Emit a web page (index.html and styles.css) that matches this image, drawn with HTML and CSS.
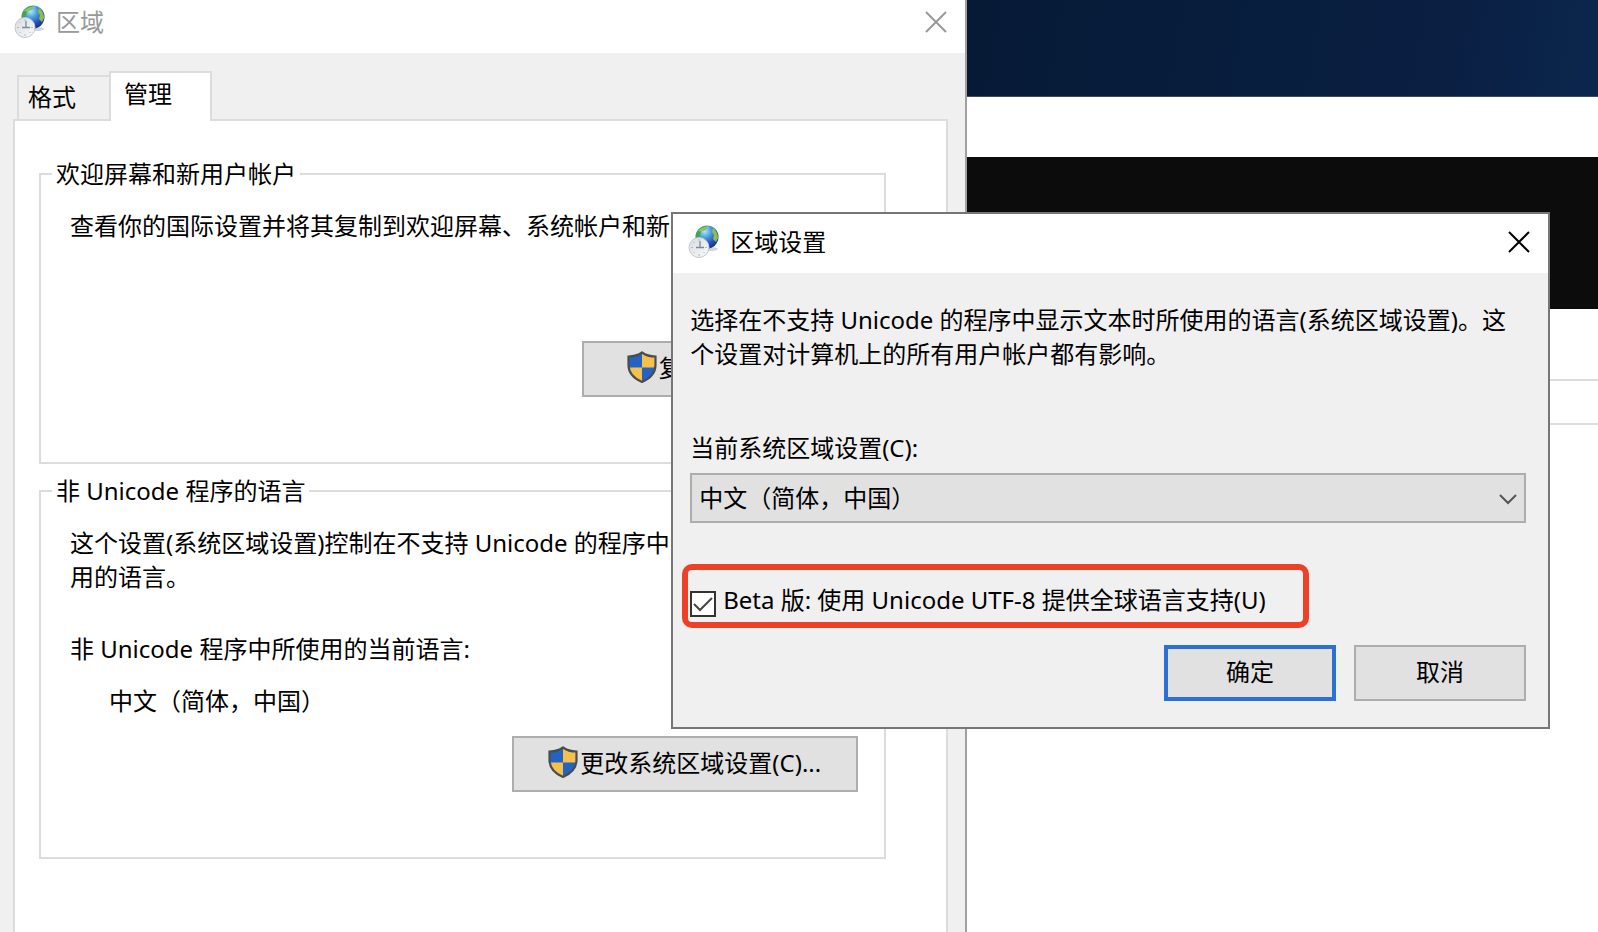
FILE: index.html
```html
<!DOCTYPE html>
<html lang="zh-CN">
<head>
<meta charset="utf-8">
<title>区域</title>
<link rel="stylesheet" href="styles.css">
</head>
<body>
<svg class="defs" aria-hidden="true">
  <defs>
    <radialGradient id="sea" cx="40%" cy="25%" r="80%">
      <stop offset="0" stop-color="#b5e6fb"/>
      <stop offset="0.35" stop-color="#4c9ddd"/>
      <stop offset="0.7" stop-color="#2350bd"/>
      <stop offset="1" stop-color="#142a80"/>
    </radialGradient>
    <linearGradient id="dial" x1="0" y1="0" x2="1" y2="1">
      <stop offset="0" stop-color="#d9dde0"/>
      <stop offset="1" stop-color="#f8f9fa"/>
    </linearGradient>
    <symbol id="region-icon" viewBox="0 0 32 34">
      <ellipse cx="22" cy="24" rx="8" ry="2" fill="#d3d6d9"/>
      <circle cx="19" cy="12" r="11.5" fill="url(#sea)"/>
      <path d="M8 13C8 6 12 2 17 1l3 1-3 3-4 2-1 3-2 2-1 3z" fill="#48a735"/>
      <path d="M25 3c3 2 5 6 5 10l-2 4-3-3 1-4-2-3z" fill="#8fbf3c"/>
      <path d="M10 6q5-5 12-4-5 1-7 5z" fill="#b9ebae" opacity=".5"/>
      <circle cx="11" cy="22.500" r="10" fill="url(#dial)" stroke="#c3c8cc" stroke-width="1"/>
      <path d="M11 14v2M11 29v2M3 22.500h2M17 22.500h2M5.500 17l1 1M16.500 28l-1-1M5.500 28l1-1" stroke="#b3b9c0" fill="none"/>
      <path d="M12 16v6.500M8 22.500h8" stroke="#7b8998" stroke-width="1.300" fill="none"/>
    </symbol>
    <symbol id="shield-icon" viewBox="0 0 30 32">
      <path d="M15 1.500C11 4.500 6 5.500 1.500 5.500V14C1.500 22 7 27.500 15 31 23 27.500 28.500 22 28.500 14V5.500C24 5.500 19 4.500 15 1.500z" fill="#f6c04c"/>
      <path d="M15 2C11 4.500 6 5.500 2 5.500V16.500H15zM15 16.500H28C27 23 22 28 15 30.500z" fill="#2462c4"/>
      <path d="M15 1.500C11 4.500 6 5.500 1.500 5.500V14C1.500 22 7 27.500 15 31 23 27.500 28.500 22 28.500 14V5.500C24 5.500 19 4.500 15 1.500z" fill="none" stroke="#4a4d50" stroke-width="2.200"/>
    </symbol>
    <symbol id="close-icon" viewBox="0 0 22 22">
      <path d="M1 1L21 21M21 1L1 21" stroke="currentColor" stroke-width="2" fill="none"/>
    </symbol>
  </defs>
</svg>

<div class="desktop">
  <div class="backdrop">
    <div class="wallpaper"></div>
    <div class="back-title"></div>
    <div class="console"></div>
    <div class="back-body"><div class="back-row"></div></div>
  </div>

  <section class="window region" aria-label="区域">
    <header class="titlebar titlebar-inactive">
      <svg class="app-icon"><use href="#region-icon"/></svg>
      <h1 class="title">区域</h1>
      <button class="close" type="button" aria-label="关闭"><svg><use href="#close-icon"/></svg></button>
    </header>
    <div class="region-body">
      <div class="tabs" role="tablist">
        <button class="tab" type="button" role="tab" aria-selected="false">格式</button>
        <button class="tab tab-active" type="button" role="tab" aria-selected="true">管理</button>
      </div>
      <div class="panel" role="tabpanel">
        <fieldset class="group">
          <legend>欢迎屏幕和新用户帐户</legend>
          <div class="group-body">
            <p>查看你的国际设置并将其复制到欢迎屏幕、系统帐户和新</p>
            <button class="btn btn-shield btn-copy" type="button"><svg class="shield"><use href="#shield-icon"/></svg>复</button>
          </div>
        </fieldset>
        <fieldset class="group">
          <legend>非 Unicode 程序的语言</legend>
          <div class="group-body">
            <p>这个设置(系统区域设置)控制在不支持 Unicode 的程序中<br>用的语言。</p>
            <p class="current-label">非 Unicode 程序中所使用的当前语言:</p>
            <p class="current-value">中文（简体，中国）</p>
            <button class="btn btn-shield btn-locale" type="button"><svg class="shield"><use href="#shield-icon"/></svg>更改系统区域设置(C)...</button>
          </div>
        </fieldset>
      </div>
    </div>
  </section>

  <section class="window dialog" role="dialog" aria-labelledby="dialog-title">
    <header class="titlebar">
      <svg class="app-icon"><use href="#region-icon"/></svg>
      <h2 class="title" id="dialog-title">区域设置</h2>
      <button class="close" type="button" aria-label="关闭"><svg><use href="#close-icon"/></svg></button>
    </header>
    <form class="dialog-body">
      <p>选择在不支持 Unicode 的程序中显示文本时所使用的语言(系统区域设置)。这个设置对计算机上的所有用户帐户都有影响。</p>
      <label class="select-label" for="locale">当前系统区域设置(C):</label>
      <div class="select-wrap">
        <select id="locale"><option>中文（简体，中国）</option></select>
        <svg class="chevron" viewBox="0 0 18 12"><path d="M1 2L9 10L17 2" fill="none" stroke="#555" stroke-width="2"/></svg>
      </div>
      <div class="callout">
        <span class="check">
          <input type="checkbox" id="utf8" checked>
          <svg class="tick" viewBox="0 0 26 26"><path d="M4 13L10 19L22 7" fill="none" stroke="#444" stroke-width="2"/></svg>
        </span>
        <label for="utf8">Beta 版: 使用 Unicode UTF-8 提供全球语言支持(U)</label>
      </div>
      <div class="actions">
        <button class="btn btn-default" type="button">确定</button>
        <button class="btn" type="button">取消</button>
      </div>
    </form>
  </section>
</div>
</body>
</html>
```
FILE: styles.css
```css
* {
  box-sizing: border-box;
}

body {
  margin: 0;
  color: #000;
  font: 24px/34px "Noto Sans", "Noto Sans CJK SC", sans-serif;
}

button,
select,
input {
  margin: 0;
  color: inherit;
  font: inherit;
}

p,
h1,
h2 {
  margin: 0;
  font-size: 24px;
  font-weight: 400;
}

.defs {
  position: absolute;
  width: 0;
  height: 0;
}

.desktop {
  position: relative;
  display: grid;
  grid-template-columns: 60.5% 1fr;
  height: 100vh;
  overflow: hidden;
}

/* Windows behind the dialog */
.backdrop {
  grid-area: 1 / 2;
  display: flex;
  flex-direction: column;
  background: #fff;
}

.wallpaper {
  height: 97px;
  background: linear-gradient(100deg, #061a36 0%, #081e3e 50%, #0a1f42 75%, #0b264d 100%);
  border-bottom: 1px solid #3d4b62;
}

.back-title {
  height: 60px;
}

.console {
  height: 152px;
  background: #0c0c0c;
}

.back-body {
  flex: 1;
  padding-top: 70px;
}

.back-row {
  height: 46px;
  border: solid #dcdcdc;
  border-width: 2px 0;
}

/* Shared window parts */
.window {
  display: flex;
  flex-direction: column;
  background: #f0f0f0;
}

.titlebar {
  display: flex;
  align-items: center;
  height: 59px;
  padding: 0 18px 4px 15px;
  background: #fff;
}

.app-icon {
  width: 32px;
  height: 34px;
}

.title {
  flex: 1;
  margin-left: 10px;
}

.close {
  display: flex;
  padding: 0;
  border: 0;
  background: none;
}

.close svg {
  width: 22px;
  height: 22px;
}

/* Region window */
.region {
  grid-area: 1 / 1;
  border-right: 2px solid #a0a0a0;
}

.titlebar-inactive {
  flex: none;
  height: 53px;
  padding: 0 18px 10px 14px;
  color: #999;
}

.region-body {
  flex: 1;
  display: flex;
  flex-direction: column;
  padding: 18px 17px 0 13px;
}

.tabs {
  display: flex;
  align-items: flex-end;
  padding-left: 4px;
}

.tab {
  height: 44px;
  width: 92px;
  padding: 0 0 2px 9px;
  border: 2px solid #dcdcdc;
  border-width: 2px 0 0 2px;
  background: #f0f0f0;
  text-align: left;
}

.tab-active {
  position: relative;
  height: 50px;
  width: 103px;
  margin-bottom: -2px;
  padding: 0 0 6px 13px;
  border-width: 2px 2px 0;
  background: #fff;
}

.panel {
  flex: 1;
  padding: 36px 60px 0 24px;
  border: 2px solid #dcdcdc;
  border-bottom: 0;
  background: #fff;
}

.group {
  min-width: 0;
  margin: 0 0 10px;
  padding: 0 11px;
  border: 2px solid #dcdcdc;
}

.group legend {
  padding: 0 4px;
}

.group-body {
  display: flex;
  flex-direction: column;
  padding: 18px 0 65px 18px;
}

.current-label {
  margin-top: 38px;
}

.current-value {
  margin: 18px 0 0 39px;
}

.btn {
  height: 56px;
  width: 172px;
  padding: 0 0 2px;
  border: 2px solid #adadad;
  background: #e1e1e1;
}

.btn-shield {
  display: flex;
  align-items: center;
  justify-content: center;
  gap: 2px;
  align-self: flex-end;
  margin-right: 15px;
}

.shield {
  width: 30px;
  height: 32px;
  margin-bottom: 3px;
}

.btn-copy {
  justify-content: flex-start;
  width: 276px;
  margin-top: 98px;
  padding-left: 43px;
}

.btn-locale {
  width: 346px;
  margin-top: 18px;
}

/* Locale dialog */
.dialog {
  position: absolute;
  top: 212px;
  left: 42%;
  width: 55%;
  border: 2px solid #767676;
}

.dialog-body {
  display: flex;
  flex-direction: column;
  padding: 30px 22px 26px 17px;
}

.select-label {
  margin-top: 60px;
}

.select-wrap {
  position: relative;
  display: flex;
  margin-top: 8px;
}

.select-wrap select {
  flex: 1;
  height: 50px;
  padding: 0 7px;
  border: 2px solid #adadad;
  border-radius: 0;
  background: #e1e1e1;
  appearance: none;
}

.chevron {
  position: absolute;
  top: 20px;
  right: 9px;
  width: 18px;
  height: 12px;
  pointer-events: none;
}

.callout {
  display: flex;
  align-items: center;
  align-self: flex-start;
  gap: 7px;
  height: 64px;
  margin: 41px 0 17px -8px;
  padding: 0 37px 0 2px;
  border: 6px solid #ec4127;
  border-radius: 10px;
}

.callout label {
  padding-top: 8px;
}

.check {
  position: relative;
  display: flex;
  margin-top: 16px;
}

.check input {
  width: 26px;
  height: 26px;
  border: 2px solid #333;
  background: #fff;
  appearance: none;
}

.tick {
  position: absolute;
  inset: 0;
  pointer-events: none;
}

.actions {
  display: flex;
  justify-content: flex-end;
  gap: 18px;
}

.btn-default {
  border: 4px solid #2b70d2;
}
```
